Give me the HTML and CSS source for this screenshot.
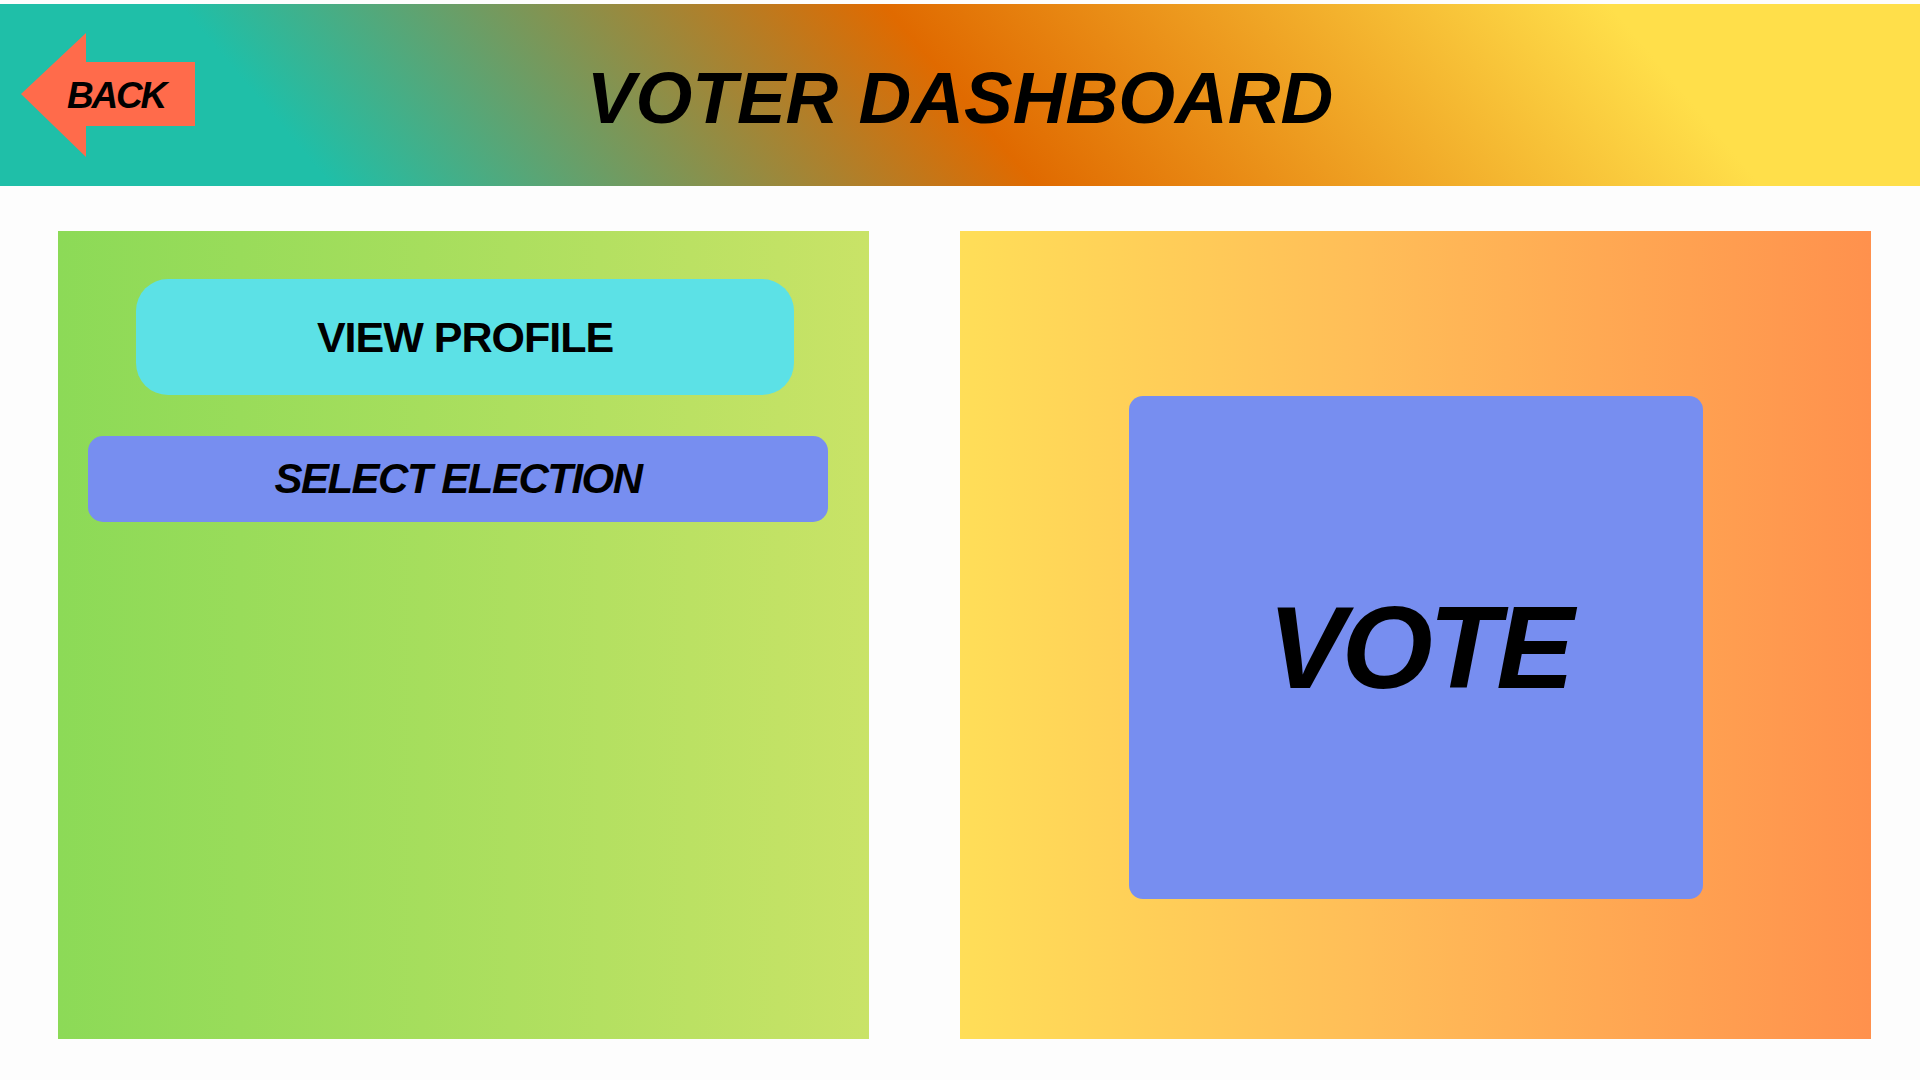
FILE: index.html
```html
<!DOCTYPE html>
<html lang="en">
<head>
<meta charset="utf-8">
<title>Voter Dashboard</title>
<link rel="stylesheet" href="styles.css">
</head>
<body>
<header class="topbar">
  <a class="back" href="#">
    <svg class="back-arrow" width="174" height="124" viewBox="0 0 174 124">
      <polygon points="0,61 65,0 65,29 174,29 174,93 65,93 65,124" fill="#ff6b4b"/>
    </svg>
    <span class="back-label">BACK</span>
  </a>
  <h1 class="title">VOTER DASHBOARD</h1>
  <div class="spacer"></div>
</header>
<main class="content">
  <section class="panel panel-left">
    <button class="btn btn-profile">VIEW PROFILE</button>
    <button class="btn btn-election">SELECT ELECTION</button>
  </section>
  <section class="panel panel-right">
    <button class="btn btn-vote">VOTE</button>
  </section>
</main>
</body>
</html>
```
FILE: styles.css
```css
* { box-sizing: border-box; }
html, body { margin: 0; padding: 0; }
body {
  width: 1920px;
  height: 1080px;
  background: #fdfdfd;
  font-family: "Liberation Sans", Arial, sans-serif;
  color: #000;
  overflow: hidden;
}
.topbar {
  margin-top: 4px;
  height: 182px;
  display: grid;
  grid-template-columns: 1fr auto 1fr;
  align-items: center;
  background: linear-gradient(50deg, #1fbfa8 0%, #1fbfa8 16%, #e06a00 50%, #ffdf4a 85%, #ffdf4a 100%);
}
.back {
  position: relative;
  display: block;
  width: 174px;
  height: 124px;
  margin-left: 21px;
  text-decoration: none;
  color: #000;
}
.back-arrow { display: block; }
.back-label {
  position: absolute;
  left: 46px;
  top: 44px;
  font-size: 37px;
  line-height: 37px;
  font-weight: bold;
  font-style: italic;
  letter-spacing: -2.2px;
}
.title {
  margin: 0;
  padding-top: 4px;
  font-size: 73px;
  line-height: 73px;
  font-weight: bold;
  font-style: italic;
  letter-spacing: 0;
  white-space: nowrap;
}
.content {
  display: flex;
  gap: 91px;
  margin-top: 45px;
  padding-left: 58px;
}
.panel {
  height: 808px;
}
.panel-left {
  width: 811px;
  display: flex;
  flex-direction: column;
  align-items: flex-start;
  padding-top: 48px;
  background: linear-gradient(to right, #8cda57 0%, #a6de5d 45%, #c9e367 100%);
}
.panel-right {
  width: 911px;
  padding-top: 165px;
  padding-left: 169px;
  background: linear-gradient(to right, #ffde58 0%, #ffbd58 45%, #ff914d 100%);
}
.btn {
  border: none;
  margin: 0;
  padding: 0;
  font-family: "Liberation Sans", Arial, sans-serif;
  font-weight: bold;
  color: #000;
  cursor: pointer;
  display: flex;
  align-items: center;
  justify-content: center;
}
.btn-profile {
  margin-left: 78px;
  width: 658px;
  height: 116px;
  border-radius: 32px;
  background: #5ce1e6;
  font-size: 43px;
  letter-spacing: -1px;
}
.btn-election {
  margin-left: 30px;
  margin-top: 41px;
  width: 740px;
  height: 86px;
  border-radius: 15px;
  background: #778ef0;
  font-size: 42px;
  font-style: italic;
  letter-spacing: -1.5px;
}
.btn-vote {
  width: 574px;
  height: 503px;
  border-radius: 14px;
  background: #778ef0;
  font-size: 117px;
  font-style: italic;
  letter-spacing: -4px;
  padding-left: 6px;
}
```
